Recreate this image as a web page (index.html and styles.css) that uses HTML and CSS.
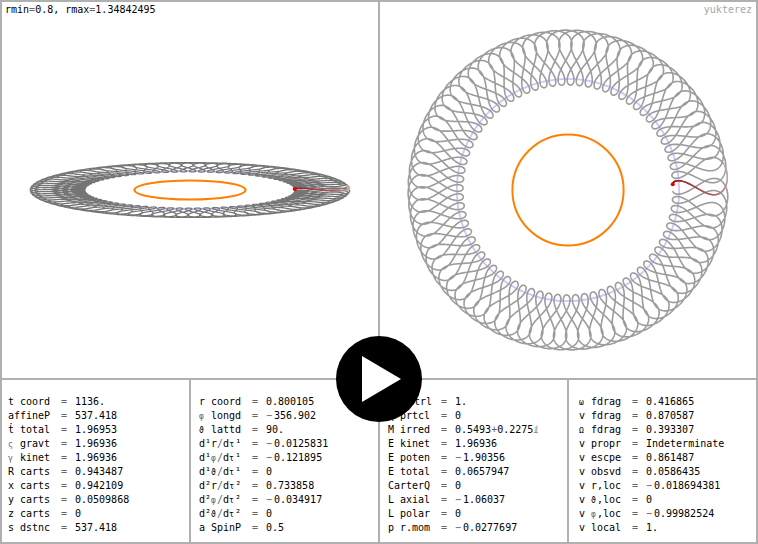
FILE: index.html
```html
<!DOCTYPE html>
<html lang="en">
<head>
<meta charset="utf-8">
<title>Photon orbit</title>
<link rel="stylesheet" href="styles.css">
</head>
<body>
<main class="frame">
  <section class="views">
    <figure class="view">
      <svg id="side" viewBox="0 0 376 376" role="img" aria-label="Orbit, inclined view"></svg>
      <figcaption class="caption">rmin<span class="soft">=</span>0.8, rmax<span class="soft">=</span>1.34842495</figcaption>
    </figure>
    <figure class="view">
      <svg id="top" viewBox="0 0 376 376" role="img" aria-label="Orbit, polar view"></svg>
      <figcaption class="caption caption-author">yukterez</figcaption>
    </figure>
    <button class="play" type="button" aria-label="Play">
      <svg class="play-icon" viewBox="0 0 86 86"><path d="M26 20 65 43 26 66Z" fill="#fff"/></svg>
    </button>
  </section>
  <section class="readouts">
    <div class="panel panel-first"><table>
      <tr><th>t coord</th><td class="eq">=</td><td>1136.</td></tr>
      <tr><th>affineP</th><td class="eq">=</td><td>537.418</td></tr>
      <tr><th>ṫ total</th><td class="eq">=</td><td>1.96953</td></tr>
      <tr><th><span class="greek soft">ς</span> gravt</th><td class="eq">=</td><td>1.96936</td></tr>
      <tr><th><span class="greek soft">γ</span> kinet</th><td class="eq">=</td><td>1.96936</td></tr>
      <tr><th>R carts</th><td class="eq">=</td><td>0.943487</td></tr>
      <tr><th>x carts</th><td class="eq">=</td><td>0.942109</td></tr>
      <tr><th>y carts</th><td class="eq">=</td><td>0.0509868</td></tr>
      <tr><th>z carts</th><td class="eq">=</td><td>0</td></tr>
      <tr><th>s dstnc</th><td class="eq">=</td><td>537.418</td></tr>
    </table></div>
    <div class="panel"><table>
      <tr><th>r coord</th><td class="eq">=</td><td>0.800105</td></tr>
      <tr><th><span class="greek soft">φ</span> longd</th><td class="eq">=</td><td><span class="minus">−</span>356.902</td></tr>
      <tr><th><span class="greek">ϑ</span> lattd</th><td class="eq">=</td><td>90.</td></tr>
      <tr><th>d¹r<span class="soft">/</span>d<span class="greek">τ</span>¹</th><td class="eq">=</td><td><span class="minus">−</span>0.0125831</td></tr>
      <tr><th>d¹<span class="greek soft">φ</span><span class="soft">/</span>d<span class="greek">τ</span>¹</th><td class="eq">=</td><td><span class="minus">−</span>0.121895</td></tr>
      <tr><th>d¹<span class="greek">ϑ</span><span class="soft">/</span>d<span class="greek">τ</span>¹</th><td class="eq">=</td><td>0</td></tr>
      <tr><th>d²r<span class="soft">/</span>d<span class="greek">τ</span>²</th><td class="eq">=</td><td>0.733858</td></tr>
      <tr><th>d²<span class="greek soft">φ</span><span class="soft">/</span>d<span class="greek">τ</span>²</th><td class="eq">=</td><td><span class="minus">−</span>0.034917</td></tr>
      <tr><th>d²<span class="greek">ϑ</span><span class="soft">/</span>d<span class="greek">τ</span>²</th><td class="eq">=</td><td>0</td></tr>
      <tr><th>a SpinP</th><td class="eq">=</td><td>0.5</td></tr>
    </table></div>
    <div class="panel"><table>
      <tr><th>℧ cntrl</th><td class="eq">=</td><td>1.</td></tr>
      <tr><th>q prtcl</th><td class="eq">=</td><td>0</td></tr>
      <tr><th>M irred</th><td class="eq">=</td><td>0.5493<span class="soft">+</span>0.2275<span class="soft">ⅈ</span></td></tr>
      <tr><th>E kinet</th><td class="eq">=</td><td>1.96936</td></tr>
      <tr><th>E poten</th><td class="eq">=</td><td><span class="minus">−</span>1.90356</td></tr>
      <tr><th>E total</th><td class="eq">=</td><td>0.0657947</td></tr>
      <tr><th>CarterQ</th><td class="eq">=</td><td>0</td></tr>
      <tr><th>L axial</th><td class="eq">=</td><td><span class="minus">−</span>1.06037</td></tr>
      <tr><th>L polar</th><td class="eq">=</td><td>0</td></tr>
      <tr><th>p r.mom</th><td class="eq">=</td><td><span class="minus">−</span>0.0277697</td></tr>
    </table></div>
    <div class="panel panel-last"><table>
      <tr><th><span class="greek">ω</span> fdrag</th><td class="eq">=</td><td>0.416865</td></tr>
      <tr><th>v fdrag</th><td class="eq">=</td><td>0.870587</td></tr>
      <tr><th><span class="greek">Ω</span> fdrag</th><td class="eq">=</td><td>0.393307</td></tr>
      <tr><th>v propr</th><td class="eq">=</td><td>Indeterminate</td></tr>
      <tr><th>v escpe</th><td class="eq">=</td><td>0.861487</td></tr>
      <tr><th>v obsvd</th><td class="eq">=</td><td>0.0586435</td></tr>
      <tr><th>v r,loc</th><td class="eq">=</td><td><span class="minus">−</span>0.018694381</td></tr>
      <tr><th>v <span class="greek">ϑ</span>,loc</th><td class="eq">=</td><td>0</td></tr>
      <tr><th>v <span class="greek soft">φ</span>,loc</th><td class="eq">=</td><td><span class="minus">−</span>0.99982524</td></tr>
      <tr><th>v local</th><td class="eq">=</td><td>1.</td></tr>
    </table></div>
  </section>
</main>
<script src="orbit.js"></script>
</body>
</html>
```
FILE: styles.css
```css
* {
  box-sizing: border-box;
}

body {
  margin: 0;
  background: #b0b0b0;
  color: #000;
  font: 10px/14px "DejaVu Sans Mono", monospace;
}

.frame {
  display: grid;
  gap: 2px;
  padding: 2px;
}

.views {
  position: relative;
  display: grid;
  grid-template-columns: 1fr 1fr;
  gap: 2px;
}

.view {
  position: relative;
  margin: 0;
  background: #fff;
}

.view svg {
  display: block;
  width: 100%;
}

.caption {
  position: absolute;
  top: 1px;
  left: 3px;
}

.caption-author {
  left: auto;
  right: 4px;
  color: #a8a8a8;
}

.play {
  position: absolute;
  left: 50%;
  bottom: -1px;
  width: 86px;
  height: 86px;
  padding: 0;
  border: 0;
  border-radius: 50%;
  background: #000;
  transform: translate(-50%, 50%);
  cursor: pointer;
}

.play-icon {
  display: block;
}

.readouts {
  display: grid;
  grid-template-columns: repeat(4, 1fr);
  gap: 2px;
}

.panel {
  padding: 15px 0 7px 8px;
  background: #fff;
}

.panel-first {
  padding-left: 6px;
}

.panel-last {
  padding-left: 10px;
}

table {
  border-collapse: collapse;
}

tr {
  height: 14px;
}

th,
td {
  height: 14px;
  padding: 0;
  font-weight: normal;
  line-height: 14px;
  text-align: left;
  white-space: nowrap;
}

th {
  width: 53px;
}

.eq {
  width: 14px;
  color: #666;
}

.greek {
  display: inline-block;
  width: 6px;
  font-size: 8px;
  line-height: 10px;
}

.soft {
  color: #666;
}

.minus {
  display: inline-block;
  width: 8px;
  color: #666;
}
```
FILE: orbit.js
```js
// Equatorial null geodesic around a charged, spinning mass (a = 0.5, Q = 1),
// integrated backwards from the current position.
const A = 0.5, Q = 1, E = 0.0657947, L = -1.06037;
const K = (L - A * E) ** 2;
const SPAN = 537.418;
const SCALE = 111.2, CENTRE = 188;

const momentum = r => E * (r * r + A * A) - A * L;
const delta = r => r * r - 2 * r + A * A + Q * Q;
const force = r => 2 * r * E * momentum(r) - (r - 1) * K;
const swirl = r => L - A * E + A * momentum(r) / delta(r);

function trace() {
  const h = 0.02;
  let r = 0.8, v = 0, phi = -356.902 * Math.PI / 180, tau = 0;
  const points = [];
  while (tau < SPAN) {
    const R = Math.hypot(r, A);
    points.push([R * Math.cos(phi), R * Math.sin(phi), tau]);
    const half = v + force(r) * h / 2;
    const next = r + half * h;
    const mid = (r + next) / 2;
    phi -= swirl(mid) * h;
    tau += mid * mid * h;
    r = next;
    v = half + force(r) * h / 2;
  }
  return points;
}

function add(svg, name, attrs) {
  const node = document.createElementNS("http://www.w3.org/2000/svg", name);
  for (const key in attrs) node.setAttribute(key, attrs[key]);
  svg.appendChild(node);
}

function draw(id, tilt, grey, width, points) {
  const svg = document.getElementById(id);
  const place = p => (CENTRE + SCALE * p[0]).toFixed(2) + " " + (CENTRE - SCALE * tilt * p[1]).toFixed(2);
  const ring = (radius, stroke, w) => add(svg, "ellipse", {
    cx: CENTRE, cy: CENTRE, rx: radius * SCALE, ry: radius * SCALE * tilt,
    fill: "none", stroke, "stroke-width": w
  });
  const TAIL = 4.2;
  ring(1, "#d8c0ff", 1.8);
  const past = points.filter(p => p[2] >= TAIL);
  add(svg, "path", {
    d: "M" + past.map(place).join("L"), fill: "none",
    stroke: grey, "stroke-width": width, "stroke-linejoin": "round"
  });
  ring(A, "#ff8000", 2);
  const tail = points.filter(p => p[2] < TAIL);
  for (let i = 0; i + 2 < tail.length; i += 2) {
    const f = Math.min(1, 1.3 * tail[i][2] / TAIL);
    const rgb = [150 + 40 * f, 20 + 145 * f, 20 + 145 * f].map(Math.round);
    add(svg, "path", {
      d: "M" + place(tail[i]) + "L" + place(tail[i + 2]), fill: "none",
      stroke: "rgb(" + rgb + ")", "stroke-width": 1.5, "stroke-linecap": "round"
    });
  }
  const [x, y] = place(points[0]).split(" ");
  add(svg, "circle", { cx: x, cy: y, r: 2, fill: "#e00000" });
}

const points = trace();
draw("side", 0.172, "#757575", 1.2, points);
draw("top", 1, "#9c9c9c", 1.6, points);
```
